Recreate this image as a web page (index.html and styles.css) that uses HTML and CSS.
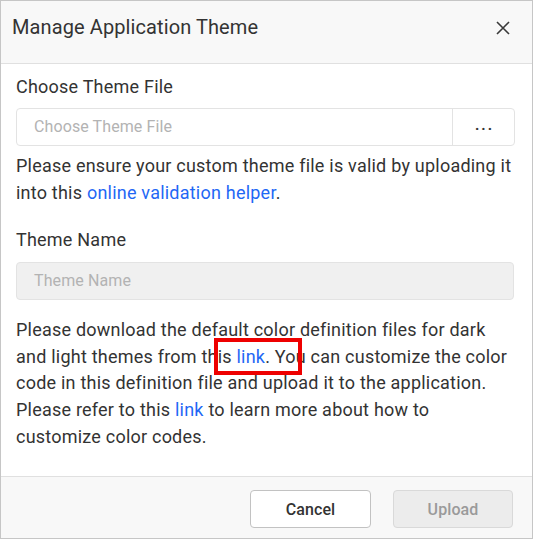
FILE: index.html
```html
<!DOCTYPE html>
<html lang="en">
<head>
<meta charset="utf-8">
<title>Manage Application Theme</title>
<link rel="stylesheet" href="styles.css">
</head>
<body>
<div class="dialog">
  <div class="dialog-header">
    <div class="dialog-title">Manage Application Theme</div>
    <button class="close-btn" aria-label="Close">
      <svg width="14" height="14" viewBox="0 0 14 14"><path d="M1 1 L13 13 M13 1 L1 13" stroke="#3a3a3a" stroke-width="1.6" fill="none"/></svg>
    </button>
  </div>
  <div class="dialog-body">
    <div class="field-label">Choose Theme File</div>
    <div class="file-input">
      <div class="file-text">Choose Theme File</div>
      <div class="file-browse">...</div>
    </div>
    <p class="para para-first">Please ensure your custom theme file is valid by uploading it into this <a class="link" href="#">online validation helper</a>.</p>
    <div class="field-label label-second">Theme Name</div>
    <div class="text-input">Theme Name</div>
    <p class="para para-second">Please download the default color definition files for dark and light themes from this <a class="link" href="#">link</a>. You can customize the color code in this definition file and upload it to the application. Please refer to this <a class="link" href="#">link</a> to learn more about how to customize color codes.</p>
  </div>
  <div class="dialog-footer">
    <button class="btn btn-cancel">Cancel</button>
    <button class="btn btn-upload">Upload</button>
  </div>
  <div class="highlight"></div>
</div>
</body>
</html>
```

FILE: styles.css
```css
html, body {
  margin: 0;
  padding: 0;
  background: #ffffff;
}

body {
  font-family: Roboto, "Liberation Sans", Arial, sans-serif;
  color: #333333;
}

.dialog {
  position: relative;
  box-sizing: border-box;
  width: 533px;
  height: 539px;
  border: 1px solid #c6c6c6;
  display: flex;
  flex-direction: column;
  background: #ffffff;
}

.dialog-header {
  box-sizing: border-box;
  height: 63px;
  flex: 0 0 auto;
  background: #f8f8f8;
  border-bottom: 1px solid #e0e0e0;
  padding: 14px 0 0 11px;
  display: flex;
  align-items: flex-start;
  justify-content: space-between;
}

.dialog-title {
  font-size: 20px;
  line-height: 24px;
  letter-spacing: 0.1px;
  color: #333333;
}

.close-btn {
  border: 0;
  background: transparent;
  padding: 0;
  margin: 6px 22px 0 0;
  width: 14px;
  height: 14px;
  display: block;
  cursor: pointer;
}

.close-btn svg {
  display: block;
}

.dialog-body {
  flex: 1 1 auto;
  padding: 10px 17px 0 15px;
  display: flex;
  flex-direction: column;
}

.field-label {
  font-size: 18px;
  line-height: 26px;
  letter-spacing: 0.22px;
  color: #333333;
}

.label-second {
  margin-top: 21px;
}

.file-input {
  box-sizing: border-box;
  margin-top: 8px;
  width: 499px;
  height: 38px;
  border: 1px solid #e3e3e3;
  border-radius: 4px;
  display: flex;
  background: #ffffff;
}

.file-text {
  flex: 1 1 auto;
  padding-left: 17px;
  font-size: 16px;
  line-height: 36px;
  letter-spacing: 0.1px;
  color: #b3b3b3;
}

.file-browse {
  flex: 0 0 59px;
  border-left: 1px solid #e3e3e3;
  text-align: center;
  font-size: 15px;
  line-height: 33px;
  letter-spacing: 2px;
  padding-left: 2px;
  color: #333333;
  font-weight: bold;
}

.text-input {
  box-sizing: border-box;
  margin-top: 9px;
  width: 498px;
  height: 38px;
  border: 1px solid #e3e3e3;
  border-radius: 4px;
  background: #f0f0f0;
  padding-left: 17px;
  font-size: 16px;
  line-height: 36px;
  letter-spacing: 0.1px;
  color: #b3b3b3;
}

.para {
  margin: 0;
  font-size: 18px;
  line-height: 26.6px;
  letter-spacing: 0.22px;
  color: #333333;
}

.para-first {
  margin-top: 7px;
}

.para-second {
  margin-top: 17px;
}

.link {
  color: #1f68f5;
  text-decoration: none;
}

.dialog-footer {
  box-sizing: border-box;
  flex: 0 0 62px;
  height: 62px;
  background: #f8f8f8;
  border-top: 1px solid #e0e0e0;
  padding: 13px 19px 0 0;
  display: flex;
  justify-content: flex-end;
  align-items: flex-start;
  gap: 22px;
}

.btn {
  box-sizing: border-box;
  height: 38px;
  border-radius: 4px;
  font-family: Roboto, "Liberation Sans", Arial, sans-serif;
  font-size: 16px;
  font-weight: 500;
  letter-spacing: 0.1px;
  padding: 0;
}

.btn-cancel {
  width: 121px;
  background: #ffffff;
  border: 1px solid #c2c2c2;
  color: #333333;
}

.btn-upload {
  width: 120px;
  background: #ececec;
  border: 1px solid #d9d9d9;
  color: #9a9a9a;
}

.highlight {
  position: absolute;
  left: 213px;
  top: 337px;
  width: 88px;
  height: 37px;
  box-sizing: border-box;
  border: 4px solid #ee0000;
  pointer-events: none;
}
```
